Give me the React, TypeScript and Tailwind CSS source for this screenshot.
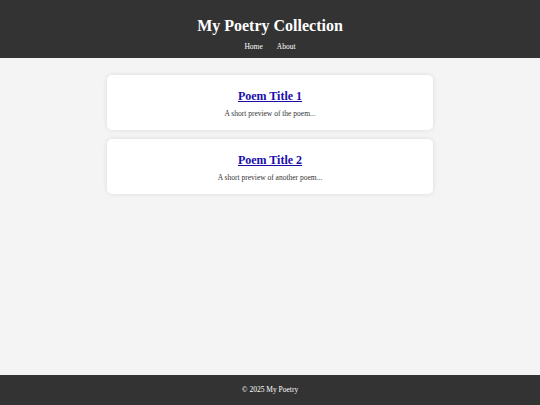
export default function App() {
  return (
    <div className="min-h-[405px] flex flex-col bg-[#f4f4f4]" style={{ fontFamily: 'Georgia, "Liberation Serif", serif' }}>
      <header className="bg-[#333333] text-white h-[58px] flex flex-col items-center pt-[16px]">
        <h1 className="text-[16px] leading-[20px] font-bold">My Poetry Collection</h1>
        <nav className="flex gap-[14px] mt-[6px] text-[7.5px] leading-[10px]">
          <a>Home</a>
          <a>About</a>
        </nav>
      </header>
      <main className="flex-1 flex flex-col items-center pt-[17px] gap-[9px]">
        {[
          ["Poem Title 1", "A short preview of the poem..."],
          ["Poem Title 2", "A short preview of another poem..."],
        ].map(([t, p]) => (
          <div key={t} className="w-[326px] h-[55px] bg-white rounded-[5px] shadow-[0_0_5px_rgba(0,0,0,0.1)] flex flex-col items-center pt-[14px]">
            <a href="#" className="text-[12px] leading-[15px] font-bold text-[#1a0dab] underline">{t}</a>
            <p className="text-[7.5px] leading-[10px] text-[#333] mt-[5px]">{p}</p>
          </div>
        ))}
      </main>
      <footer className="bg-[#333333] text-white h-[30px] flex items-center justify-center text-[7.5px]">
        © 2025 My Poetry
      </footer>
    </div>
  );
}
